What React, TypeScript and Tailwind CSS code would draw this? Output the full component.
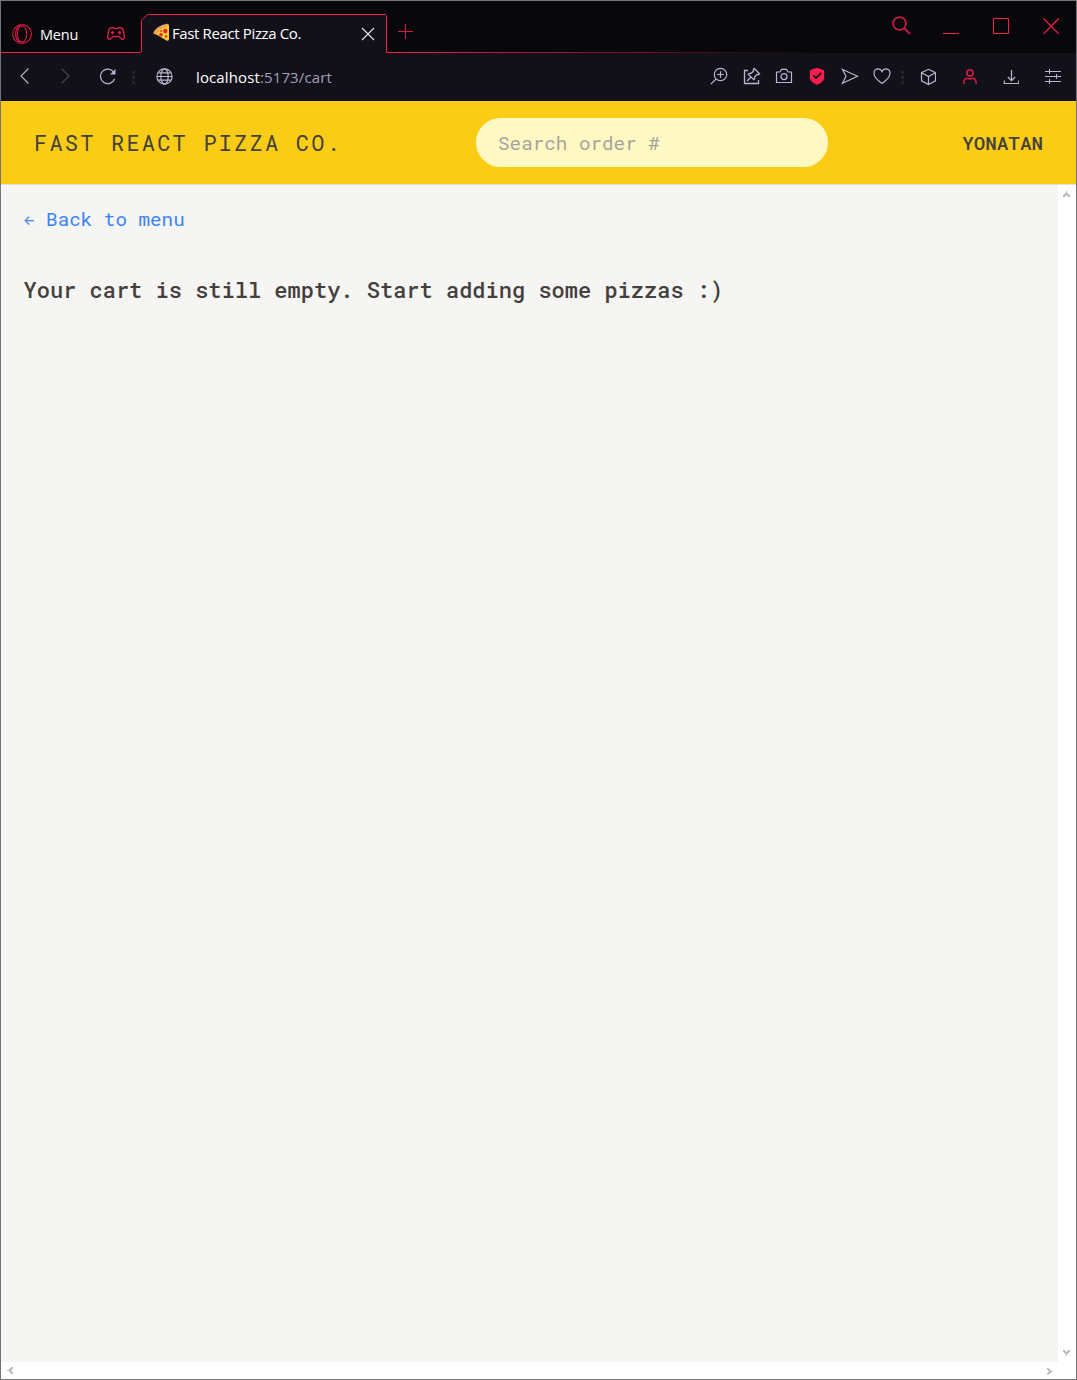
import type { ReactNode } from "react";

const mono = "font-['Roboto_Mono','DejaVu_Sans_Mono',monospace]";
const ui = "font-['Open_Sans','Noto_Sans',sans-serif]";

type IconProps = { w?: number; h?: number; className?: string; sw?: number; children: ReactNode };

function Icon({ w = 18, h = 18, className = "", sw = 1.1, children }: IconProps) {
  return (
    <svg
      width={w}
      height={h}
      viewBox={`0 0 ${w} ${h}`}
      fill="none"
      stroke="currentColor"
      strokeWidth={sw}
      className={`block shrink-0 ${className}`}
    >
      {children}
    </svg>
  );
}

function Dots({ className = "" }: { className?: string }) {
  return (
    <span className={`flex shrink-0 flex-col gap-[2px] ${className}`}>
      <i className="size-[3px] bg-[#252235]" />
      <i className="size-[3px] bg-[#252235]" />
      <i className="size-[3px] bg-[#252235]" />
    </span>
  );
}

function PizzaIcon() {
  return (
    <svg width="17" height="18" viewBox="0 0 17 18" className="mt-[1px] block shrink-0">
      <path d="M1 10L13 2.5Q16 1 16 3V16Q16 18.5 13.5 17.5Z" fill="#ffcc32" />
      <path d="M0.3 10Q3.5 2.5 14 0.8Q16 0.6 16 3Q8 4 3.6 11.3Q0.5 11.7 0.3 10Z" fill="#f2a35c" />
      <circle cx="12.3" cy="8" r="2.2" fill="#e8262d" />
      <circle cx="8" cy="11.7" r="1.8" fill="#e8262d" />
      <circle cx="13" cy="13.5" r="1.2" fill="#e8262d" />
      <circle cx="8" cy="7.9" r="0.9" fill="#e8262d" />
    </svg>
  );
}

function TabStrip() {
  return (
    <div className="flex h-[52px] bg-[#08080c] text-[#fa1e4e]">
      <div className="flex w-[139px] shrink-0 border-b border-[#fa1e4e] pt-[23px] pl-[11px]">
        <Icon w={20} h={20} className="text-[#dc1c48]">
          <circle cx="10" cy="10" r="9.4" />
          <ellipse cx="10" cy="10" rx="4.7" ry="8" />
          <path d="M9 2C1.8 3.2 1.8 16.8 9 18" />
        </Icon>
        <span className={`${ui} ml-2 h-5 w-[66px] text-[14.5px] leading-[22px] tracking-[-0.2px] text-white`}>
          Menu
        </span>
        <Icon w={20} h={16} className="mt-[2px] text-[#dc1c48]" sw={1.4}>
          <path d="M6.2 1.7Q8 2.6 10 2.6T13.8 1.7Q16.6 1.4 17.3 4.5L18.3 10.5Q18.3 14 15.8 13.2L12.8 10.5H7.2L4.2 13.2Q1.7 14 1.7 10.5L2.7 4.5Q3.4 1.4 6.2 1.7Z" />
          <path d="M5 6.7H8.2M6.6 5.1V8.3M12 6.7H15.2M13.6 5.1V8.3" />
        </Icon>
      </div>
      <div className="relative flex w-[248px] shrink-0 items-start">
        <svg width="248" height="52" viewBox="0 0 248 52" className="absolute inset-0">
          <path
            d="M0 51.5L1.5 50.5V19.5L7.5 13.5H245.5L246.5 14.5V51.5H248V52H0Z"
            fill="#12111a"
          />
          <path d="M0 51.5L1.5 50.5V19.5L7.5 13.5H245.5L246.5 14.5V51.5H248" fill="none" stroke="#fa1e4e" />
        </svg>
        <div className="relative mt-[21px] flex w-full pl-[13px]">
          <PizzaIcon />
          <span className={`${ui} ml-[2px] w-[188px] text-[15px] leading-[22px] tracking-[-0.37px] text-white`}>
            Fast React Pizza Co.
          </span>
          <Icon w={14} h={14} className="mt-[5px] ml-[0.5px] text-[#e5e5e5]">
            <path d="M1 1L13 13M13 1L1 13" />
          </Icon>
        </div>
      </div>
      <div className="flex flex-1 flex-col">
        <div className="flex h-[51px]">
          <Icon w={15} h={15} sw={1} className="mt-[23px] ml-[10px] text-[#d81c46]">
            <path d="M0 7.5H15M7.5 0V15" />
          </Icon>
          <div className="ml-auto flex pt-[15px] pr-[16px]">
            <Icon w={19} h={19} className="mr-[32px] text-[#c91b43]" sw={1.8}>
              <circle cx="7.5" cy="7.5" r="6.4" />
              <path d="M12 12L18 18" />
            </Icon>
            <Icon w={16} h={20} className="mr-[34px]" sw={1}>
              <path d="M0 17.5H16" />
            </Icon>
            <Icon w={17} h={20} className="mr-[33px]" sw={1}>
              <path d="M0.5 2.5H15.5V17.5H0.5Z" />
            </Icon>
            <Icon w={17} h={20} sw={1.2}>
              <path d="M0.5 2.5L15.8 17.8M15.8 2.5L0.5 17.8" />
            </Icon>
          </div>
        </div>
        <div className="h-px w-[430px] bg-linear-to-r from-[#fa1e4e] to-transparent" />
      </div>
    </div>
  );
}

function Toolbar() {
  return (
    <div className="flex h-12 shrink-0 items-center bg-[#12111a] pl-[18px] text-[#b9b4cf]">
      <Icon w={10} h={18} className="mr-[32px] -translate-y-px">
        <path d="M9.5 1.5L2 9L9.5 16.5" />
      </Icon>
      <Icon w={10} h={18} className="mr-[28px] -translate-y-px text-[#4a4659]">
        <path d="M0.5 1.5L8 9L0.5 16.5" />
      </Icon>
      <Icon w={17} h={18} className="mr-[16px]" sw={1.3}>
        <path d="M15 4.5A7.3 7.3 0 1 0 15.6 11" />
        <path d="M16.5 1V6.5H11Z" fill="currentColor" stroke="none" />
      </Icon>
      <Dots className="mr-[21px]" />
      <Icon w={17} h={17} className="mr-[23px] -translate-y-px" sw={1.2}>
        <circle cx="8.5" cy="8.5" r="7.6" />
        <ellipse cx="8.5" cy="8.5" rx="3.7" ry="7.6" />
        <path d="M1 8.5H16M2.3 4.8H14.7M2.3 12.2H14.7" />
      </Icon>
      <span className={`${ui} text-[15px] leading-6 tracking-[0.12px] whitespace-nowrap text-white`}>
        localhost<span className="text-[#a39eb8]">:5173/cart</span>
      </span>
      <div className="ml-auto flex items-center pr-[15px]">
        <Icon w={18} h={18} className="mr-[15px] -translate-y-px" sw={1.2}>
          <circle cx="10.5" cy="7.5" r="6.2" />
          <path d="M6 12L0.8 17.2M7.2 7.5H13.8M10.5 4.2V10.8" />
        </Icon>
        <Icon w={18} h={18} className="mr-[14px] -translate-y-px" sw={1.3}>
          <path d="M5 3.5H1.5V16.5H15.5V13" />
          <path d="M11.3 1.5L16.5 6.7L15.3 7.7L14 7.4L11.7 9.7V11.7L10.7 12.7L5.3 7.3L6.3 6.3H8.3L10.6 4L10.3 2.7ZM8 10L4 14" />
        </Icon>
        <Icon w={18} h={18} className="mr-[16px] -translate-y-px" sw={1.2}>
          <path d="M1.5 5H5L6.5 2.3H11.5L13 5H16.5V15.5H1.5Z" />
          <circle cx="9" cy="9.6" r="3" />
        </Icon>
        <Icon w={16} h={18} className="mr-[16px] -translate-y-px">
          <path d="M8 0.8L14.5 3.1Q15.2 3.5 15.2 4.3V11Q15.2 14.5 8 17.8Q0.8 14.5 0.8 11V4.3Q0.8 3.5 1.5 3.1Z" fill="#fa1e4e" stroke="none" />
          <path d="M4.2 8.3L7 11.1L12.2 6" stroke="#12111a" strokeWidth="1.8" />
        </Icon>
        <Icon w={18} h={18} className="mr-[14px] -translate-y-px" sw={1.2}>
          <path d="M1.5 2.5L16.5 9.2L1.5 16.2L5 9.2Z" />
        </Icon>
        <Icon w={18} h={18} className="mr-[10px] -translate-y-px" sw={1.2}>
          <path d="M9 16.5Q1 11 1 6.3Q1 2.1 4.8 1.8Q7.8 1.8 9 4.6Q10.2 1.8 13.2 1.8Q17 2.1 17 6.3Q17 11 9 16.5Z" />
        </Icon>
        <Dots className="mr-[16px]" />
        <Icon w={16} h={18} className="mr-[26px]" sw={1.2}>
          <path d="M8.5 1.3L15.5 4.7V12.8L8.5 16.5L1.5 12.8V4.7ZM1.5 4.7L8.5 8.5L15.5 4.7M8.5 8.5V16.5" />
        </Icon>
        <Icon w={16} h={18} className="mr-[25px] text-[#c91b43]" sw={1.7}>
          <circle cx="8" cy="5" r="3.1" />
          <path d="M1.8 16Q1.8 10 5.5 10.5Q8 11.3 10.5 10.5Q14.2 10 14.2 16" />
        </Icon>
        <Icon w={16} h={18} className="mr-[25px]" sw={1.2}>
          <path d="M8.5 2V12.5M4.8 9L8.5 12.7L12.2 9M1.3 12.5V15.5H15.7V12.5" />
        </Icon>
        <Icon w={17} h={18} sw={1.1}>
          <path d="M1 3.5H17M1 8.5H17M1 13.5H17M5.5 1V6M12.5 6V11M5.5 11V16" />
        </Icon>
      </div>
    </div>
  );
}

function ScrollArrow({ className = "" }: { className?: string }) {
  return (
    <svg width="8" height="7" viewBox="0 0 8 7" shapeRendering="crispEdges" className={`block shrink-0 ${className}`}>
      <path d="M1 4H2V3H3V2H4V0H5V2H6V3H7V4H8V6H6V5H5V4H4V5H3V6H1Z" fill="#bcbcbc" />
    </svg>
  );
}

export default function App() {
  return (
    <div className="flex h-[1380px] w-[1077px] flex-col overflow-hidden border border-[#757575] bg-white">
      <TabStrip />
      <Toolbar />
      <header
        className={`${mono} flex h-[84px] shrink-0 items-center justify-between border-b border-[#e3e1df] bg-[#facc15] px-[33px] text-[#44403c]`}
      >
        <a className="w-[310px] text-[22px] leading-[33px] font-normal tracking-[2.2px] whitespace-nowrap uppercase">
          Fast React Pizza Co.
        </a>
        <input
          placeholder="Search order #"
          className="mr-[2px] h-[49px] w-[352px] rounded-full bg-[#fef9c3] px-[22px] text-[19.25px] outline-none placeholder:text-[#a8a29e]"
        />
        <p className="text-[19.25px] leading-[27px] font-medium uppercase">Yonatan</p>
      </header>
      <div className="flex h-[1177px] shrink-0">
        <main className={`${mono} flex-1 bg-[#f5f5f4] px-[22px] pt-[20px] text-[#44403c]`}>
          <a className="flex h-[28px] text-[19.25px] leading-[28px] whitespace-pre text-[#3b82f6]">
            <span className="w-[11.55px] font-['Inter',sans-serif] text-[13px] leading-[31px] font-medium">←</span>
            <span> Back to menu</span>
          </a>
          <p className="mt-[40px] pl-[0.5px] text-[22px] leading-[33px] font-medium">
            Your cart is still empty. Start adding some pizzas :)
          </p>
        </main>
        <div className="flex w-[18px] flex-col items-center justify-between bg-white py-[6px] pr-[2px]">
          <ScrollArrow />
          <ScrollArrow className="-scale-y-100" />
        </div>
      </div>
      <div className="flex h-[16px] items-center justify-between bg-white pr-[23px] pl-[5px]">
        <ScrollArrow className="-rotate-90" />
        <ScrollArrow className="rotate-90" />
      </div>
    </div>
  );
}
